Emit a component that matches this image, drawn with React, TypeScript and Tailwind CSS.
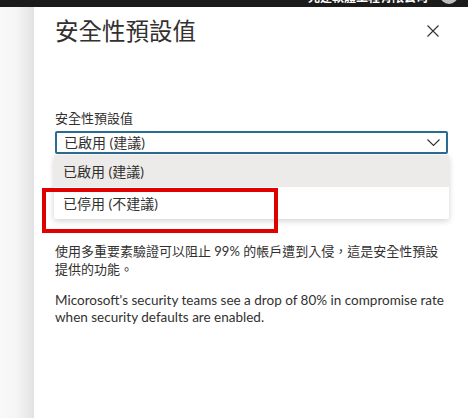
const font = { fontFamily: 'Lato, "Noto Sans CJK TC", sans-serif' };

export default function App() {
  return (
    <div
      className="w-[468px] h-[418px] overflow-hidden flex flex-col bg-[#f6f6f6] text-[#323130]"
      style={font}
    >
      {/* Top bar */}
      <div className="h-[7px] shrink-0 bg-[#1b1b1b] relative overflow-hidden">
        <span className="absolute left-[308px] top-[-10px] text-[12px] leading-[16px] font-semibold text-white whitespace-nowrap">
          光建軟體工程有限公司
        </span>
        <span className="absolute left-[440px] top-[-14px] w-[18px] h-[18px] rounded-full bg-[#bdbdbd]" />
      </div>

      <div className="flex flex-1 min-h-0">
        {/* Left gutter */}
        <div className="w-[33px] shrink-0 bg-gradient-to-r from-[#f9f9f9] via-[#f5f5f5] to-[#e4e4e4]" />

        {/* Panel */}
        <div className="flex-1 min-w-0 bg-white border-l border-[#e1e1e1] relative pl-[21px] pr-[20px]">
          <div className="flex items-center justify-between pt-[8px] pr-[9px]">
            <h1 className="text-[23.5px] leading-[32px] font-normal">安全性預設值</h1>
            <svg width="12" height="12" viewBox="0 0 12 12" className="text-[#323130]">
              <path d="M0.5 0.5 L11.5 11.5 M11.5 0.5 L0.5 11.5" stroke="currentColor" strokeWidth="1.1" fill="none" />
            </svg>
          </div>

          <div className="mt-[62px] text-[13px] leading-[18px]">安全性預設值</div>

          <div className="relative mt-[4px]">
            <div className="h-[23px] border-2 border-[#2a6c94] rounded-[2px] flex items-center justify-between pl-[7px] pr-[6px] text-[14px]">
              <span>已啟用 (建議)</span>
              <svg width="13" height="7" viewBox="0 0 13 7" className="text-[#323130]">
                <path d="M0.5 0.5 L6.5 6.5 L12.5 0.5" stroke="currentColor" strokeWidth="1.1" fill="none" />
              </svg>
            </div>

            {/* Dropdown */}
            <div className="absolute left-[-1px] right-[-1px] top-[24px] bg-white rounded-[2px] shadow-[0_2px_6px_rgba(0,0,0,0.18)] text-[14px] z-10">
              <div className="h-[32px] bg-[#edebe9] flex items-center pl-[9px]">已啟用 (建議)</div>
              <div className="h-[32px] flex items-center pl-[9px]">已停用 (不建議)</div>
            </div>
          </div>

          {/* Red highlight */}
          <div className="absolute left-[8px] top-[181px] w-[236px] h-[45px] border-[4px] border-[#e00000] z-20" />

          <div className="mt-[88px] text-[13px] leading-[18px]">
            <p className="pr-[8px]">使用多重要素驗證可以阻止 99% 的帳戶遭到入侵，這是安全性預設提供的功能。</p>
            <p className="mt-[14px] text-[13.5px] leading-[17px]">
              <span className="whitespace-nowrap">Micorosoft's security teams see a drop of 80% in compromise rate</span>
              <br />
              when security defaults are enabled.
            </p>
          </div>
        </div>
      </div>
    </div>
  );
}
